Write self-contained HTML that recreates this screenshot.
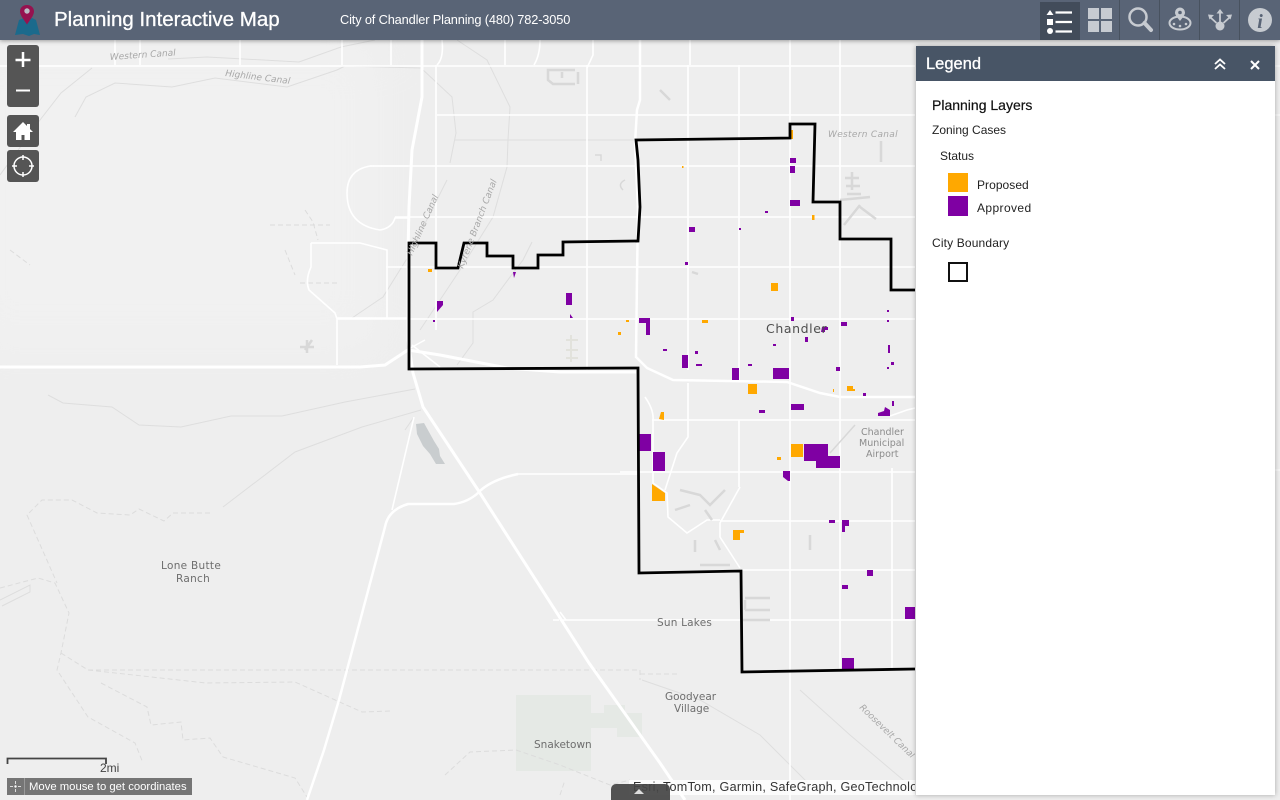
<!DOCTYPE html>
<html><head><meta charset="utf-8"><title>Planning Interactive Map</title>
<style>
html,body{margin:0;padding:0;width:1280px;height:800px;overflow:hidden;background:#eee;font-family:"Liberation Sans",sans-serif}
#map{position:absolute;left:0;top:0}
#hdr{position:absolute;left:0;top:0;width:1280px;height:40px;background:#596476;box-shadow:0 1px 4px rgba(0,0,0,.35);color:#fff}
#ttl{position:absolute;left:54px;top:8px;font-size:20.5px;font-weight:normal;white-space:nowrap;-webkit-text-stroke:.3px #fff}
#sub{position:absolute;left:340px;top:12px;font-size:12.8px;white-space:nowrap;letter-spacing:-.15px}
.btn{position:absolute;left:7px;width:32px;background:#555;border-radius:3px}
#panel{position:absolute;left:916px;top:46px;width:359px;height:749px;background:#fff;box-shadow:0 0 5px rgba(0,0,0,.3)}
#ptitle{position:absolute;left:0;top:0;width:359px;height:35px;background:#485566;color:#fff}
#ptitle span{position:absolute;left:10px;top:9px;font-size:16.5px;-webkit-text-stroke:.3px #fff}
.t{position:absolute;font-size:12px;color:#222;white-space:nowrap}
.sw{position:absolute;left:32px;width:20px;height:20px}
#coord{position:absolute;left:7px;top:778px;width:185px;height:17px;background:#757575;color:#fff;font-size:11.3px;line-height:17px}
#attr{position:absolute;left:629px;top:780px;width:286px;height:15px;background:rgba(255,255,255,.8);overflow:hidden;font-size:12.6px;line-height:15px;color:#333;white-space:nowrap;letter-spacing:.25px}
#tab{position:absolute;left:611px;top:784px;width:59px;height:16px;background:rgba(70,70,70,.93);border-radius:5px 5px 0 0}
</style></head><body>
<svg id="map" width="1280" height="800" viewBox="0 0 1280 800" xmlns="http://www.w3.org/2000/svg">
<defs><filter id="b"><feGaussianBlur stdDeviation="25"/></filter></defs>
<rect width="1280" height="800" fill="#eeeeee"/>
<rect x="-40" y="40" width="420" height="310" fill="#f1f1f1" filter="url(#b)"/>
<path d="M516 695H591V713H604V705H625V713H642V737H617V728H591V771H516Z" fill="#e5e9e5"/>
<path d="M416 424l8-1 10 18 5 8 1 7 5 8h-9l-6-10-7-8-6-12z" fill="#c9cdcf"/>
<g fill="none" stroke="#dedede" stroke-width="1">
<path d="M0 175L40 120 61 93 92 68M168 59L207 57 299 62 341 47 375 40"/>
<path d="M75 117L86 97 115 83 172 87 215 78 287 87 337 70 345 66 421 68 452 97 456 133 450 163"/>
<path d="M457 40L487 60 510 107 508 140 507 167 493 217 460 270 420 330"/>
<path d="M455 140H635M447 180L408 257 383 297 352 318M532 242L523 260 513 273 493 300 473 312V343L457 365"/>
<path d="M48 395L63 403 112 407 139 425 181 427 231 416 282 416 345 402 415 389"/>
<path d="M223 507L295 452 362 427 421 410M414 417L405 430"/>
<path d="M642 680L700 700 760 735 815 790M800 690L850 735 915 790"/>
</g>
<g fill="none" stroke="#dcdcdc" stroke-width="1" stroke-dasharray="5 3">
<path d="M210 513L173 513 164 521 139 509 130 515 97 513 72 500 42 500 27 515 57 583"/>
<path d="M0 588L38 578 55 583 69 613 61 653 57 670 88 717 135 743 143 763"/>
<path d="M61 653L88 670 206 683 295 682 362 712 391 711M101 683L147 707 151 725 181 722 183 740 210 738 223 757 295 778 307 797"/>
<path d="M88 670H640V680M640 674H680"/>
<path d="M445 775L470 752 516 750 560 765 610 785 630 780M560 795L565 780"/>
<path d="M305 210l8 12 5 18M270 225h60M285 250l10 25M10 250l20 15M300 283h40"/>
</g>
<path d="M0 600L30 585 30 592 2 606" fill="none" stroke="#ddd"/>
<g fill="none" stroke="#fff" stroke-width="1.6">
<path d="M0 66H915M437 115H915M370 166H915M395 217H915M386 267H915M337 319H915"/>
<path d="M436 65V330M587 65V370M688 65V370M739 65V380M790 40V382M840 40V397M115 40V65M140 40V65M240 40V65M342 40V65M391 40V65"/>
<path d="M442 40Q444 58 437 65M505 40V65M540 40Q540 55 534 65M593 40V55L587 68M690 40V65"/>
<path d="M408 166H370Q347 170 347 193Q347 225 380 230Q392 228 395 218H408"/>
<path d="M311 243V267Q305 280 309 290L335 313 337 319V365M311 243H360L387 250V318M337 318H410"/>
<path d="M652 420H915M620 472H915M720 521H915M740 570H915M560 620H915M892 468V670M790 382V800M840 397V670M739 420V487"/>
<path d="M645 397Q654 410 653 420V483L667 493 668 517 687 533 707 520H720M688 383V437L677 453 665 490"/>
<path d="M740 487L720 523V537L740 568M890 416L907 410 915 408"/>
<path d="M518 474H640M414 417L392 510M560 612l6 8M553 620h6"/>
</g>
<g fill="none" stroke="#fff">
<path stroke-width="3" d="M422 40V97L412 150 409 207 408 253V340L413 373 423 407 478 490 589 663 660 763 685 800"/>
<path stroke-width="3" d="M0 367H360L385 365 408 350 440 355 507 368 560 372H636"/>
<path stroke-width="2.5" d="M640 40V100L637 110 635 143 638 210 637 277 636 357 647 368 673 380 787 382 820 393 840 397H915"/>
<path stroke-width="2.5" d="M307 800L324 750 339 700 385 527Q388 510 408 504H454Q468 502 478 493 490 480 518 474"/>
<path stroke-width="1.5" d="M412 345L440 367M403 352L425 340"/>
</g>
<g fill="none" stroke="#d8d8d8" stroke-width="2.5">
<path d="M881 141V162M852 172V190M845 178h14M846 186h14M847 194h14M840 200l30 -3M860 205l-16 20M860 207l16 12M300 347h14M307 340v13M312 340l-7 10M692 272l6 2M575 70H548V80l5 4H575M562 72V78M578 72V84M660 90L670 100"/>
<path d="M680 490L700 495 710 505 725 490M690 505L675 510M705 510L712 520M695 540V552M715 540L720 550M700 565H730M810 535V550M745 598H770M745 610H770M745 600V610M743 620H770"/>
<path stroke-width="1.5" d="M623 190q-6 -6 2 -10M595 155h6v6M855 425l-25 28"/>
</g>
<path d="M571 335V362M566 340h12M566 350h12M566 358h12" stroke="#e2e2dc" fill="none" stroke-width="2"/>
<g fill="#7f00a3">
<rect x="790" y="158" width="6" height="5"/><rect x="790" y="166" width="5" height="7"/><rect x="790" y="200" width="10" height="6"/><rect x="765" y="211" width="3" height="2"/>
<rect x="689" y="227" width="6" height="5"/><rect x="739" y="228" width="2" height="2"/><rect x="685" y="262" width="3" height="3"/>
<path d="M639 318h11v17h-4v-12h-7z"/><rect x="791" y="317" width="3" height="4"/><rect x="841" y="322" width="6" height="4"/><rect x="887" y="310" width="2" height="2"/><rect x="887" y="320" width="2" height="2"/>
<rect x="805" y="337" width="3" height="5"/><path d="M822 327h6v3h-3v2h-4z"/><rect x="773" y="344" width="3" height="2"/><rect x="663" y="349" width="4" height="2"/><rect x="695" y="351" width="3" height="3"/>
<rect x="682" y="355" width="6" height="13"/><rect x="696" y="364" width="6" height="2"/><rect x="748" y="364" width="4" height="2"/><rect x="732" y="368" width="7" height="12"/><rect x="773" y="368" width="16" height="11"/><rect x="836" y="367" width="4" height="4"/>
<rect x="888" y="345" width="2" height="8"/><rect x="891" y="362" width="3" height="3"/><rect x="887" y="367" width="2" height="2"/>
<rect x="863" y="393" width="3" height="3"/><rect x="892" y="401" width="2" height="5"/><rect x="791" y="404" width="13" height="6"/><rect x="759" y="410" width="6" height="3"/><path d="M878 416V413L884 411 885 407 890 410V416Z"/>
<rect x="639" y="434" width="12" height="17"/><rect x="653" y="452" width="12" height="19"/><path d="M804 444h24v12h12v12H816v-7h-12z"/><path d="M783 471h7v10l-2 0-5-4z"/>
<rect x="829" y="520" width="6" height="3"/><path d="M842 520h7v6h-4v6h-3z"/><rect x="867" y="570" width="6" height="6"/><rect x="842" y="585" width="6" height="4"/><rect x="905" y="607" width="10" height="12"/><rect x="842" y="658" width="12" height="12"/>
<path d="M513 272h3l-2 6z"/><path d="M437 301h6v4l-6 7z"/><rect x="433" y="320" width="2" height="2"/><rect x="566" y="293" width="6" height="12"/><path d="M570 314l3 4h-3z"/>
</g>
<g fill="#ffa800">
<rect x="789" y="130" width="4" height="9"/><rect x="812" y="215" width="2.5" height="5"/><rect x="771" y="283" width="7" height="8"/><rect x="626" y="320" width="3" height="2"/><rect x="702" y="320" width="6" height="3"/>
<rect x="748" y="384" width="9" height="10"/><path d="M847 386h6v3h2v2h-8z"/><rect x="833" y="389" width="1" height="3"/><path d="M659 419l2-7 3 0v8z"/><rect x="791" y="444" width="12" height="13"/><rect x="777" y="457" width="4" height="3"/>
<path d="M652 484l13 9v8h-13z"/><path d="M733 530h11v3h-4v7h-7z"/><rect x="428" y="269" width="4" height="3"/><rect x="618" y="332" width="3" height="3"/><rect x="682" y="166" width="1.5" height="2"/>
</g>
<g fill="none" stroke="#000" stroke-width="2.8" stroke-linejoin="miter">
<path d="M915 290H891V239H840V202H813L815 124H790V138L636 140 638 160 640 207 638 241 563 242V255H538V268H513V256H487V243H464L458 268H436V243H409V369L638 368 639 573 741 571 742 672 915 669"/>
</g>
<g font-family="'DejaVu Sans',sans-serif" fill="#6e6e6e" font-size="10">
<text x="766" y="333" font-size="12.5" fill="#4e4e4e" letter-spacing=".6">Chandler</text>
<text x="161" y="569" font-size="10.5" letter-spacing=".3">Lone Butte</text><text x="176" y="582" font-size="10.5" letter-spacing=".3">Ranch</text>
<text x="657" y="626" font-size="10.5" letter-spacing=".2">Sun Lakes</text>
<text x="665" y="700" font-size="10.5">Goodyear</text><text x="674" y="712" font-size="10.5">Village</text>
<text x="534" y="748" font-size="10.5">Snaketown</text>
<g fill="#8c8c8c"><text x="861" y="435" font-size="9.5">Chandler</text><text x="859" y="446" font-size="9.5">Municipal</text><text x="866" y="457" font-size="9.5">Airport</text></g>
<g fill="#a8a8a8" font-size="9" font-style="italic">
<text x="828" y="137" letter-spacing=".3">Western Canal</text>
<text transform="translate(110,60) rotate(-4)">Western Canal</text>
<text transform="translate(225,76) rotate(7)">Highline Canal</text>
<text transform="translate(412,256) rotate(-66)">Highline Canal</text>
<text transform="translate(463,269) rotate(-69)">Kyrene Branch Canal</text>
<text transform="translate(859,708) rotate(44)">Roosevelt Canal</text>
</g></g>
<rect x="915" y="40" width="365" height="760" fill="#eee"/>
<path d="M1275 66h5M1275 115h5M1275 470h5" stroke="#fff"/>
<path d="M7.500 764V758.500H106V764" fill="none" stroke="#444" stroke-width="1.800"/>
<text x="100" y="772" font-size="12" fill="#444" font-family="'Liberation Sans',sans-serif">2mi</text>
</svg>

<div id="hdr">
<svg style="position:absolute;left:12px;top:2px" width="30" height="36" viewBox="0 0 30 36">
<path d="M3 33L7 18l5-2 3 2 5-2 4 2 4 15-6-1-5 2-6-2z" fill="#1b6a8c"/>
<path d="M15 3c-4.500 0-7 3-7 6.500 0 4 4.500 9 7 13 2.500-4 7-9 7-13C22 6 19.500 3 15 3z" fill="#96124f"/>
<circle cx="15" cy="9" r="2.700" fill="#b9bcc4"/>
</svg>
<div id="ttl">Planning Interactive Map</div>
<div id="sub">City of Chandler Planning (480) 782-3050</div>
<svg style="position:absolute;left:1030px;top:0" width="250" height="40" viewBox="1030 0 250 40">
<rect x="1040" y="2" width="40" height="38" fill="#424c5a"/>
<path d="M1119.500 0V40M1159.500 0V40M1199.500 0V40M1239.500 0V40" stroke="#48525f"/>
<g fill="#fff"><path d="M1050 10l3.500 5h-7z"/><rect x="1047" y="19" width="6" height="6"/><circle cx="1050" cy="31" r="3"/></g>
<path d="M1055.500 12.500H1072M1055.500 22H1072M1055.500 31.500H1072" stroke="#fff" stroke-width="2.200"/>
<g fill="#c7cbd1"><rect x="1088" y="8" width="11" height="11"/><rect x="1101" y="8" width="11" height="11"/><rect x="1088" y="21" width="11" height="11"/><rect x="1101" y="21" width="11" height="11"/></g>
<circle cx="1138" cy="17" r="8.500" fill="none" stroke="#c7cbd1" stroke-width="2.500"/>
<path d="M1144.500 23L1151 30" stroke="#c7cbd1" stroke-width="4" stroke-linecap="round"/>
<ellipse cx="1180" cy="23" rx="10.500" ry="6.500" fill="none" stroke="#c7cbd1" stroke-width="2"/>
<circle cx="1174" cy="24" r="1.300" fill="#c7cbd1"/><circle cx="1180" cy="26" r="1.300" fill="#c7cbd1"/><circle cx="1186" cy="24" r="1.300" fill="#c7cbd1"/>
<path d="M1180 21c-3-4-5-6-5-8.500a5 5 0 0 1 10 0c0 2.500-2 4.500-5 8.500z" fill="#c7cbd1"/><circle cx="1180" cy="12.500" r="1.800" fill="#596476"/>
<circle cx="1220" cy="26" r="4.500" fill="#c7cbd1"/>
<path d="M1220 22V12M1216.500 23L1210 17M1223.500 23L1230 17" stroke="#c7cbd1" stroke-width="1.800"/>
<path d="M1220 9l-3.500 4.500h7zM1208 14.500l6 .5-4.500 4.500zM1232 14.500l-6 .5 4.500 4.500z" fill="#c7cbd1"/>
<circle cx="1260" cy="20" r="12" fill="#c7cbd1"/>
<text x="1260" y="28" text-anchor="middle" font-family="'Liberation Serif',serif" font-style="italic" font-weight="bold" font-size="20" fill="#596476">i</text>
</svg>
</div>

<div class="btn" style="top:45px;height:62px"><svg width="32" height="62"><path d="M16 7V22M8.500 15H23.500" stroke="#fff" stroke-width="2.500"/><path d="M9 45.500H23" stroke="#fff" stroke-width="2"/></svg></div>
<div class="btn" style="top:115px;height:32px"><svg width="32" height="32"><path d="M16 7L6 17h3v8h5.500v-5h3v5H23v-8h3l-3-3V9h-3v2z" fill="#fff"/></svg></div>
<div class="btn" style="top:150px;height:32px"><svg width="32" height="32"><circle cx="16" cy="16" r="9" fill="none" stroke="#fff" stroke-width="1.500"/><path d="M16 5V10M16 22V27M5 16H10M22 16H27" stroke="#fff" stroke-width="1.500"/></svg></div>

<div id="coord"><svg style="position:absolute;left:0;top:0" width="18" height="17"><path d="M8.500 3V6M8.500 11V14M3 8.500H6M11 8.500H14" stroke="#ddd"/><circle cx="8.500" cy="8.500" r="1.200" fill="#fff"/><path d="M17.500 0V17" stroke="#999"/></svg><span style="position:absolute;left:22px;top:1px;white-space:nowrap">Move mouse to get coordinates</span></div>
<div id="attr"><span style="margin-left:4px">Esri, TomTom, Garmin, SafeGraph, GeoTechnologies, Inc</span></div>
<div id="tab"><svg width="59" height="16" style="position:absolute;left:0;top:0"><path d="M28 5l-5 5h10z" fill="#ddd"/></svg></div>

<div id="panel">
<div id="ptitle"><span>Legend</span>
<svg style="position:absolute;left:290px;top:8px" width="60" height="20"><path d="M9 10l5-4.500 5 4.500M9 15l5-4.500 5 4.500" fill="none" stroke="#fff" stroke-width="1.800"/><path d="M45 7L53 15M53 7L45 15" stroke="#fff" stroke-width="2"/></svg></div>
<div class="t" style="left:16px;top:51px;font-size:14px;color:#111;-webkit-text-stroke:.2px #111">Planning Layers</div>
<div class="t" style="left:16px;top:77px">Zoning Cases</div>
<div class="t" style="left:24px;top:103px">Status</div>
<div class="sw" style="top:127px;height:19px;background:#ffa800"></div><div class="t" style="left:61px;top:132px;letter-spacing:.05px">Proposed</div>
<div class="sw" style="top:150px;background:#7f00a3"></div><div class="t" style="left:61px;top:155px;letter-spacing:.4px">Approved</div>
<div class="t" style="left:16px;top:190px;letter-spacing:.15px">City Boundary</div>
<div class="sw" style="top:216px;width:16px;height:16px;border:2px solid #111"></div>
</div>
</body></html>
